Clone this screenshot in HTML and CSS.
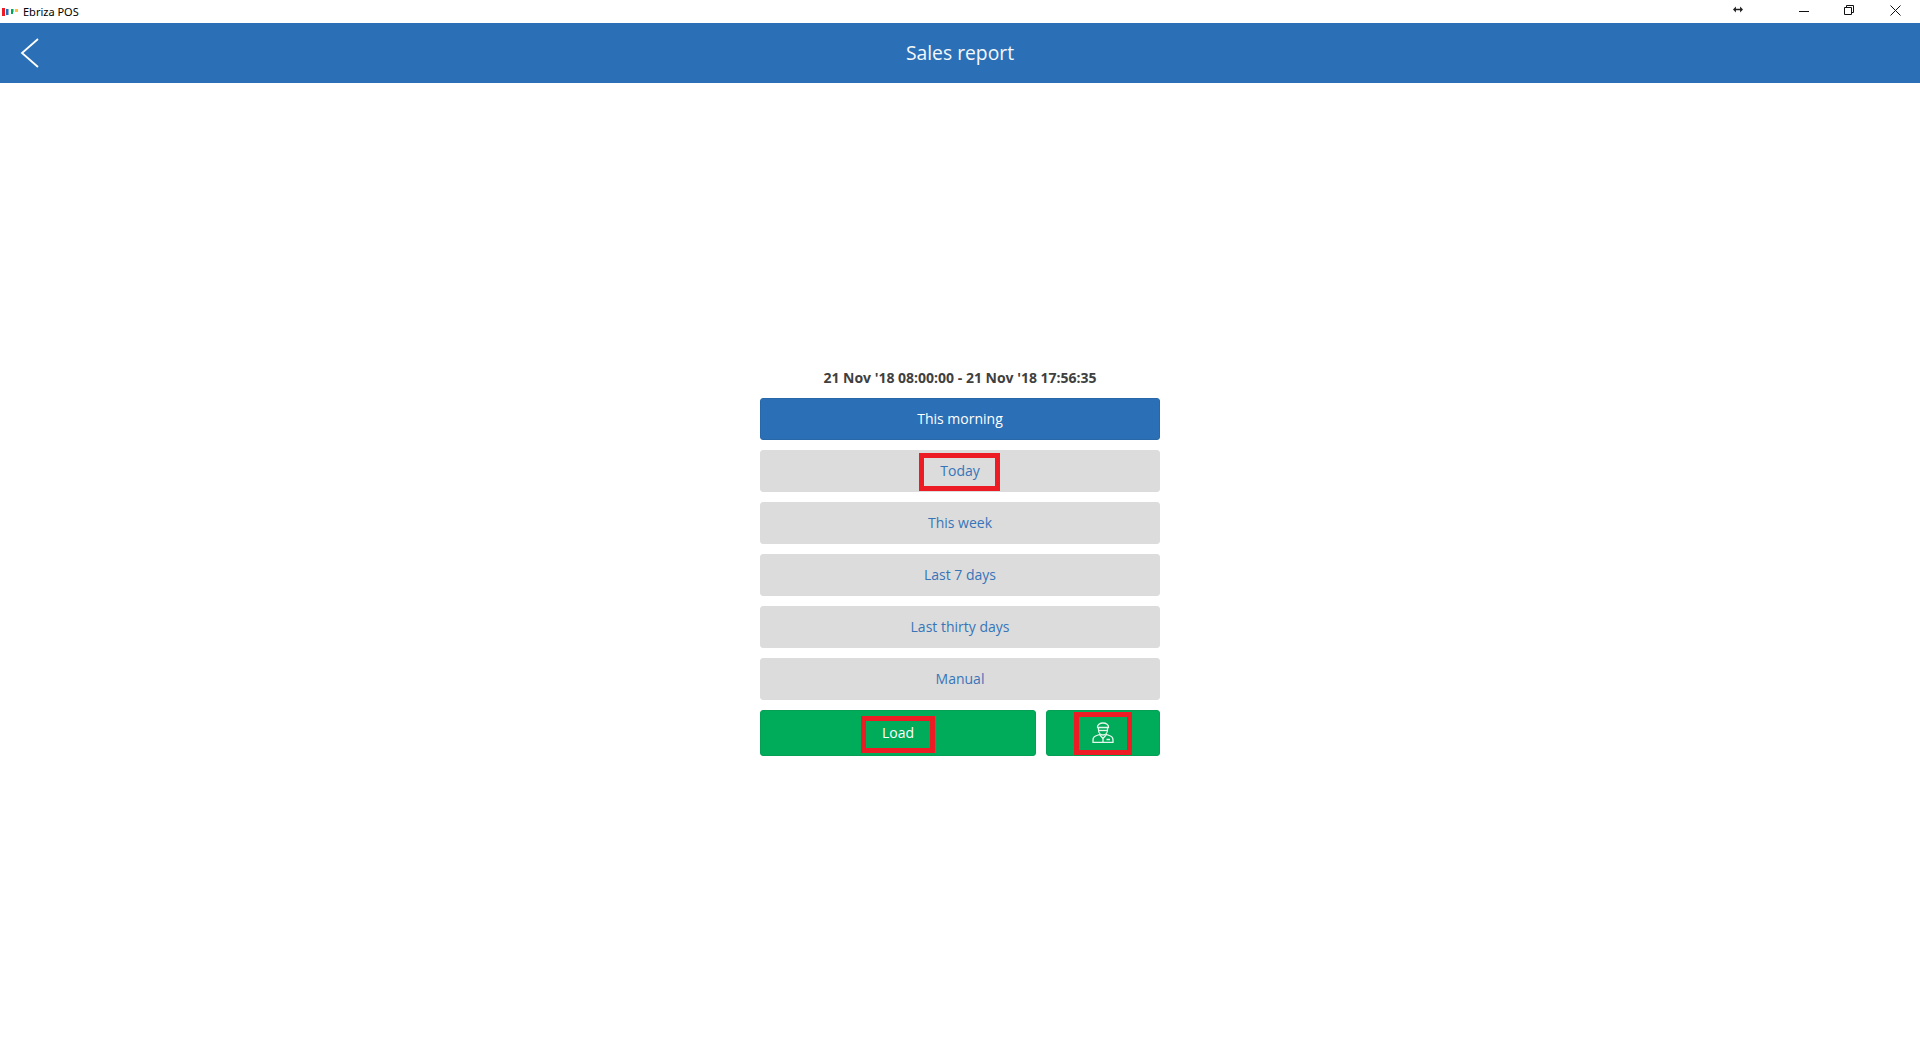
FILE: index.html
```html
<!DOCTYPE html>
<html lang="en">
<head>
<meta charset="utf-8">
<title>Ebriza POS</title>
<link rel="stylesheet" href="styles.css">
</head>
<body>
<div class="app">
  <div class="titlebar">
    <div class="app-id">
      <svg class="app-logo" width="18" height="10" viewBox="0 0 18 10">
        <rect x="2" y="1" width="3" height="8" fill="#ed1c24"/>
        <rect x="6" y="2" width="2" height="6" fill="#2b70b6"/>
        <rect x="8" y="2" width="1" height="6" fill="#8db4da"/>
        <rect x="11" y="2" width="2" height="5" fill="#00a859"/>
        <rect x="13" y="2" width="1" height="3" fill="#8fce9f"/>
        <rect x="15" y="2" width="3" height="3" fill="#fbc040"/>
      </svg>
      <span>Ebriza POS</span>
    </div>
    <div class="win-controls">
      <svg class="win-resize" width="10" height="7" viewBox="0 0 12 8"><path d="M0 4l3.500-3.500v2.500h5v-2.500l3.500 3.500-3.500 3.500v-2.500h-5v2.500z" fill="#222"/></svg>
      <svg class="win-min" width="10" height="10" viewBox="0 0 10 10"><path d="M0 5.500h10" stroke="#111" fill="none"/></svg>
      <svg class="win-max" width="10" height="10" viewBox="0 0 10 10"><path d="M.5 2.500h7v7h-7zM2.500 2.500v-2h7v7h-2" stroke="#111" fill="none"/></svg>
      <svg class="win-close" width="11" height="11" viewBox="0 0 11 11"><path d="M.5.500l10 10M10.500.500l-10 10" stroke="#111" fill="none"/></svg>
    </div>
  </div>
  <header class="header">
    <svg class="back" width="20" height="32" viewBox="0 0 20 32"><path d="M18 2L2 16l16 14" fill="none" stroke="#fff" stroke-width="1.800"/></svg>
    <h1>Sales report</h1>
  </header>
  <main class="content">
    <div class="panel">
      <div class="range">21 Nov '18 08:00:00 - 21 Nov '18 17:56:35</div>
      <button class="btn btn-active">This morning</button>
      <button class="btn"><span class="mark mark-today"></span>Today</button>
      <button class="btn">This week</button>
      <button class="btn">Last 7 days</button>
      <button class="btn">Last thirty days</button>
      <button class="btn">Manual</button>
      <div class="actions">
        <button class="btn btn-green btn-load"><span class="mark mark-load"></span>Load</button>
        <button class="btn btn-green btn-user"><span class="mark mark-user"></span>
          <svg width="22" height="21" viewBox="0 0 22 21" fill="none" stroke="#e4f7ec" stroke-width="1.300">
            <path d="M5.500 5.500C5 3 8 1 11 1s6 2 5.500 4.500z"/>
            <path d="M6.500 5.500V8c0 3 2 5 4.500 5s4.500-2 4.500-5V5.500"/>
            <path d="M7 8.500h8"/>
            <path d="M7.500 12.500L3.500 14C1.800 14.700 1 16 1 18v2.500h20V18c0-2-.8-3.300-2.500-4l-4-1.500L11 16.500z"/>
            <path d="M11 16.500v4M14.500 17.500h3.500"/>
          </svg>
        </button>
      </div>
    </div>
  </main>
</div>
</body>
</html>
```

FILE: styles.css
```css
* { box-sizing: border-box; }
html, body { margin: 0; height: 100%; background: #fff; }
body { font-family: "Open Sans", "Liberation Sans", sans-serif; overflow: hidden; }
.app { display: flex; flex-direction: column; height: 1039px; }

.titlebar { display: flex; justify-content: space-between; align-items: center; height: 23px; flex: none; background: #fff; }
.app-id { display: flex; align-items: center; gap: 5px; padding-left: 0; font-family: "Noto Sans", "Open Sans", sans-serif; font-size: 11px; color: #000; }
.app-logo { display: block; }
.win-controls { display: flex; align-items: center; height: 100%; padding-right: 19px; }
.win-resize { margin-right: 56px; margin-bottom: 5px; }
.win-min { margin-right: 35px; margin-bottom: 1px; }
.win-max { margin-right: 36px; margin-bottom: 3px; }
.win-close { margin-bottom: 3px; }

.header { position: relative; display: flex; align-items: center; justify-content: center; height: 60px; flex: none; padding-bottom: 2px; background: #2b70b6; }
.header h1 { margin: 0; font-size: 19.300px; font-weight: 400; color: #f4f8fb; }
.back { position: absolute; left: 20px; top: 14px; }

.content { flex: 1; display: flex; align-items: center; justify-content: center; }
.panel { width: 400px; display: flex; flex-direction: column; gap: 10px; padding-top: 2px; }
.range { text-align: center; font-size: 14px; font-weight: 700; color: #404040; height: 20px; line-height: 20px; }

.btn { position: relative; display: block; width: 100%; height: 42px; padding: 0 0 2px; border: 1px solid #dcdcdc; border-radius: 3px; background: #dcdcdc; color: #3775b9; font-family: inherit; font-size: 14px; }
.btn-active { background: #2b70b6; border-color: #2867a8; color: #fff; font-weight: 500; }
.btn-green { height: 46px; background: #00ab59; border-color: #03a055; color: #fff; font-weight: 500; }
.actions { display: flex; gap: 10px; }
.btn-load { flex: 1; width: auto; }
.btn-user { flex: none; width: 114px; display: flex; align-items: center; justify-content: center; }
.btn-user svg { display: block; }

.mark { position: absolute; border: 5px solid #ed1c24; }
.mark-today { left: 158px; top: 2px; width: 81px; height: 38px; }
.mark-load { left: 100px; top: 5px; width: 74px; height: 37px; }
.mark-user { left: 27px; top: 1px; width: 58px; height: 43px; }
```
